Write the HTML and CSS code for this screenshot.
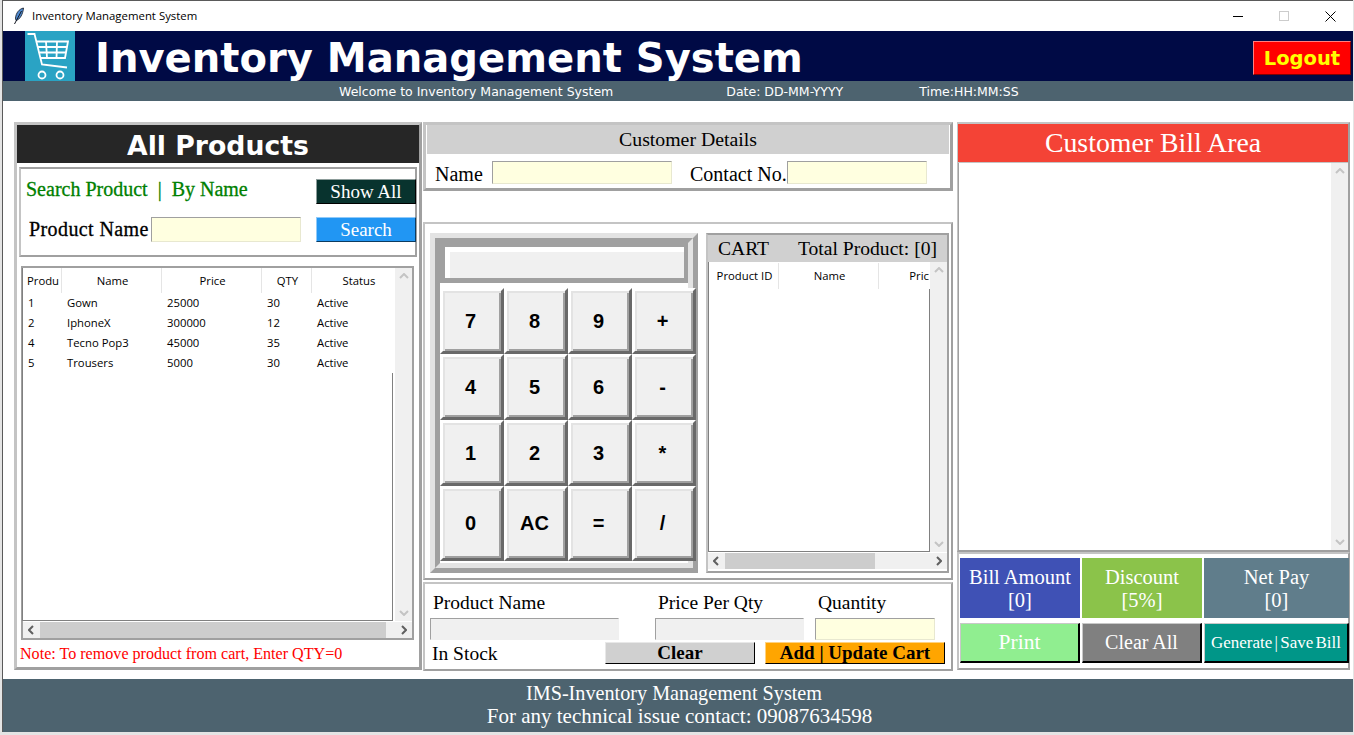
FILE: index.html
```html
<!DOCTYPE html>
<html>
<head>
    <title>Inventory Management System</title>
    <link rel="stylesheet" href="styles.css">
</head>
<body>
<svg class="defs" width="0" height="0">
    <symbol id="chev" viewBox="0 0 10 6"><path d="M1 5l4-4 4 4" fill="none" stroke="currentColor" stroke-width="2"/></symbol>
</svg>
<div class="window">
    <div class="titlebar">
        <svg class="feather" width="12" height="18" viewBox="0 0 12 18">
            <path d="M10.5 1C6 2 3 6 2.5 11c0 1 .2 2 .6 2.5C7 12.5 10 7 10.5 1z" fill="#4f8ad0" stroke="#10151f" stroke-width=".8"/>
            <path d="M8.5 4L1.5 17" stroke="#10151f" stroke-width="1"/>
        </svg>
        <span class="titlebar-text">Inventory Management System</span>
        <div class="win-btn">
            <svg width="10" height="10"><path d="M0 5.5h10" stroke="#000"/></svg>
        </div>
        <div class="win-btn">
            <svg width="10" height="10"><rect x=".5" y=".5" width="9" height="9" fill="none" stroke="#ccc"/></svg>
        </div>
        <div class="win-btn">
            <svg width="11" height="11"><path d="M.5.5l10 10M10.5.5l-10 10" stroke="#000"/></svg>
        </div>
    </div>

    <div class="header">
        <svg class="cart-logo" width="50" height="50" viewBox="0 0 50 50">
            <rect width="50" height="50" fill="#2aa3c4"/>
            <g fill="none" stroke="#fff" stroke-width="1.8">
                <path d="M2.5 3H9.5L17 33.5 42 36.5"/>
                <path d="M11 10.5H43L40 27H15"/>
                <path d="M13 16H42M14.5 21.5H41M21 10.5l1 16.5M32 10.5l-.5 16.5"/>
                <circle cx="17" cy="44" r="3.5"/>
                <circle cx="35" cy="44" r="3.5"/>
            </g>
        </svg>
        <h1 class="app-title">Inventory Management System</h1>
        <button type="button" class="logout">Logout</button>
    </div>
    <div class="subbar">
        <span>Welcome to Inventory Management System</span>
        <span class="sub-date">Date: DD-MM-YYYY</span>
        <span class="sub-time">Time:HH:MM:SS</span>
    </div>

    <div class="main">
        <div class="panel products">
            <div class="products-title">All Products</div>
            <div class="search-frame">
                <div class="search-row">
                    <span class="search-head">Search Product&nbsp; |&nbsp; By Name</span>
                    <button type="button" class="btn-side btn-showall">Show All</button>
                </div>
                <div class="search-row search-row2">
                    <label class="search-label">Product Name</label>
                    <input type="text" class="yellow search-input">
                    <button type="button" class="btn-side btn-search">Search</button>
                </div>
            </div>
            <div class="table-frame">
                <div class="tree-wrap">
                    <div class="tree">
                        <div class="tree-head">
                            <span class="col-id">Produ</span>
                            <span class="col-name">Name</span>
                            <span class="col-price">Price</span>
                            <span class="col-qty">QTY</span>
                            <span class="col-status">Status</span>
                        </div>
                        <div class="tree-row">
                            <span class="col-id">1</span><span class="col-name">Gown</span><span class="col-price">25000</span><span class="col-qty">30</span><span class="col-status">Active</span>
                        </div>
                        <div class="tree-row">
                            <span class="col-id">2</span><span class="col-name">IphoneX</span><span class="col-price">300000</span><span class="col-qty">12</span><span class="col-status">Active</span>
                        </div>
                        <div class="tree-row">
                            <span class="col-id">4</span><span class="col-name">Tecno Pop3</span><span class="col-price">45000</span><span class="col-qty">35</span><span class="col-status">Active</span>
                        </div>
                        <div class="tree-row">
                            <span class="col-id">5</span><span class="col-name">Trousers</span><span class="col-price">5000</span><span class="col-qty">30</span><span class="col-status">Active</span>
                        </div>
                        <div class="tree-rest"></div>
                    </div>
                    <div class="vscroll">
                        <svg class="chev"><use href="#chev"/></svg>
                        <svg class="chev chev-down"><use href="#chev"/></svg>
                    </div>
                </div>
                <div class="hscroll">
                    <svg class="chev chev-left"><use href="#chev"/></svg>
                    <div class="hthumb"></div>
                    <svg class="chev chev-right"><use href="#chev"/></svg>
                </div>
            </div>
            <div class="note">Note: To remove product from cart, Enter QTY=0</div>
        </div>

        <div class="middle">
            <div class="panel customer">
                <div class="customer-title">Customer Details</div>
                <div class="customer-row">
                    <label class="cust-name">Name</label>
                    <input type="text" class="yellow cust-input1">
                    <label class="cust-contact">Contact No.</label>
                    <input type="text" class="yellow cust-input2">
                </div>
            </div>

            <div class="panel calc-cart">
                <div class="calc">
                    <div class="calc-inner">
                        <input type="text" class="calc-display">
                        <div class="calc-keys">
                            <button type="button">7</button><button type="button">8</button><button type="button">9</button><button type="button">+</button>
                            <button type="button">4</button><button type="button">5</button><button type="button">6</button><button type="button">-</button>
                            <button type="button">1</button><button type="button">2</button><button type="button">3</button><button type="button">*</button>
                            <button type="button">0</button><button type="button">AC</button><button type="button">=</button><button type="button">/</button>
                        </div>
                    </div>
                </div>
                <div class="cart">
                    <div class="cart-head"><span>CART</span><span>Total Product: [0]</span></div>
                    <div class="cart-body">
                        <div class="cart-tree">
                            <div class="tree-head cart-tree-head">
                                <span class="ccol-id">Product ID</span>
                                <span class="ccol-name">Name</span>
                                <span class="ccol-price">Pric</span>
                            </div>
                            <div class="cart-rest"></div>
                        </div>
                        <div class="vscroll">
                            <svg class="chev"><use href="#chev"/></svg>
                            <svg class="chev chev-down"><use href="#chev"/></svg>
                        </div>
                    </div>
                    <div class="hscroll cart-hscroll">
                        <svg class="chev chev-left"><use href="#chev"/></svg>
                        <div class="hthumb"></div>
                        <svg class="chev chev-right"><use href="#chev"/></svg>
                    </div>
                </div>
            </div>

            <div class="panel cart-form">
                <div class="form-fields">
                    <div class="field field-name">
                        <label>Product Name</label>
                        <input type="text" class="grey">
                    </div>
                    <div class="field field-price">
                        <label>Price Per Qty</label>
                        <input type="text" class="grey">
                    </div>
                    <div class="field field-qty">
                        <label>Quantity</label>
                        <input type="text" class="yellow">
                    </div>
                </div>
                <div class="form-actions">
                    <span class="in-stock">In Stock</span>
                    <button type="button" class="form-btn btn-clear">Clear</button>
                    <button type="button" class="form-btn btn-add">Add | Update Cart</button>
                </div>
            </div>
        </div>

        <div class="right">
            <div class="panel bill">
                <div class="bill-title">Customer Bill Area</div>
                <div class="bill-body">
                    <div class="bill-text"></div>
                    <div class="vscroll">
                        <svg class="chev"><use href="#chev"/></svg>
                        <svg class="chev chev-down"><use href="#chev"/></svg>
                    </div>
                </div>
            </div>
            <div class="panel bill-menu">
                <div class="tile tile-amount">Bill Amount<br>[0]</div>
                <div class="tile tile-discount">Discount<br>[5%]</div>
                <div class="tile tile-net">Net Pay<br>[0]</div>
                <button type="button" class="bill-btn btn-print">Print</button>
                <button type="button" class="bill-btn btn-clearall">Clear All</button>
                <button type="button" class="bill-btn btn-generate">Generate | Save Bill</button>
            </div>
        </div>
    </div>

    <div class="footer">
        <div>IMS-Inventory Management System</div>
        <div class="footer-contact">For any technical issue contact: 09087634598</div>
    </div>
</div>
</body>
</html>
```

FILE: styles.css
```css
* {
    box-sizing: border-box;
}

body {
    margin: 0;
    background: #e4e4e4;
    font-family: "Liberation Serif", serif;
    color: #000;
    overflow: hidden;
}

button {
    font-family: "Liberation Serif", serif;
    padding: 0;
    cursor: pointer;
}

input {
    display: block;
    margin: 0;
    padding: 0;
}

.defs {
    position: absolute;
}

.window {
    margin-left: 2px;
    width: 1351px;
    height: 732px;
    background: #fff;
    border-top: 1px solid #5a5a5a;
    border-left: 1px solid #5a5a5a;
    display: flex;
    flex-direction: column;
}

.titlebar {
    height: 30px;
    display: flex;
    align-items: center;
    padding-left: 10px;
}

.feather {
    margin-right: 7px;
}

.titlebar-text {
    font-family: "Open Sans", sans-serif;
    font-size: 11.4px;
    flex: 1;
    margin-top: -2px;
}

.win-btn {
    width: 46px;
    height: 30px;
    display: flex;
    align-items: center;
    justify-content: center;
}

.header {
    height: 50px;
    background: #000a45;
    display: flex;
    align-items: center;
    padding: 0 2px 0 22px;
}

.cart-logo {
    display: block;
}

.app-title {
    flex: 1;
    margin: 4px 0 0 20px;
    font-family: "DejaVu Sans", sans-serif;
    font-size: 40.1px;
    font-weight: bold;
    color: #fff;
    white-space: nowrap;
}

.logout {
    width: 98px;
    height: 34px;
    margin-top: 3px;
    padding-top: 2px;
    background: #f00;
    color: #ff0;
    font-family: "DejaVu Sans", sans-serif;
    font-size: 19.5px;
    font-weight: bold;
    border: 1px solid;
    border-color: #ff8080 #800000 #800000 #ff8080;
}

.subbar {
    height: 20px;
    background: #4d636f;
    color: #fff;
    font-family: "DejaVu Sans", sans-serif;
    font-size: 12.5px;
    line-height: 21px;
    padding-left: 336px;
    white-space: nowrap;
}

.sub-date {
    margin-left: 109px;
}

.sub-time {
    margin-left: 72px;
}

.main {
    height: 578px;
    padding: 21px 0 0 11px;
    display: flex;
    align-items: flex-start;
}

.panel {
    border: 2px solid;
    border-color: #c4c4c4 #a0a0a0 #a0a0a0 #c4c4c4;
    background: #fff;
}

/* left column */
.products {
    width: 408px;
    height: 548px;
    border-width: 3px;
    flex: none;
}

.products-title {
    height: 38px;
    background: #262626;
    color: #fff;
    font-family: "DejaVu Sans", sans-serif;
    font-size: 26.7px;
    font-weight: bold;
    line-height: 41px;
    text-align: center;
}

.search-frame {
    width: 398px;
    height: 90px;
    margin: 4px 0 0 2px;
    border: 2px solid;
    border-color: #a0a0a0 #a0a0a0 #a0a0a0 #c4c4c4;
    padding-top: 10px;
}

.search-row {
    display: flex;
    align-items: center;
    height: 25px;
}

.search-row2 {
    margin-top: 13px;
}

.search-head {
    flex: none;
    width: 295px;
    padding-left: 5px;
    color: #008000;
    font-size: 20px;
    white-space: nowrap;
    margin-top: -4px;
    -webkit-text-stroke: .3px #008000;
}

.search-label {
    flex: none;
    width: 130px;
    padding-left: 8px;
    font-size: 20px;
    letter-spacing: .4px;
    white-space: nowrap;
    -webkit-text-stroke: .3px #000;
}

.search-input {
    flex: none;
    width: 150px;
    height: 25px;
    margin-right: 15px;
}

.yellow,
.grey {
    border: 1px solid;
    border-color: #a0a0a0 #e8e8d0 #e8e8d0 #a0a0a0;
    background: #ffffe0;
}

.grey {
    background: #f0f0f0;
    border-color: #a0a0a0 #f0f0f0 #f0f0f0 #a0a0a0;
}

.btn-side {
    width: 100px;
    height: 25px;
    flex: none;
    color: #fff;
    font-size: 19px;
    border: 1px solid;
}

.btn-showall {
    background: #08332e;
    border-color: #8c9c9a #000 #000 #8c9c9a;
}

.btn-search {
    background: #2196f3;
    border-color: #90caf9 #0c3c61 #0c3c61 #90caf9;
}

.table-frame {
    width: 393px;
    height: 374px;
    margin: 9px 0 0 4px;
    border: 2px solid #a0a0a0;
}

.tree-wrap {
    height: 353px;
    display: flex;
}

.tree {
    width: 371px;
    display: flex;
    flex-direction: column;
    border-bottom: 1px solid #808080;
    border-left: 1px solid #808080;
    margin-left: -1px;
    font-family: "Open Sans", sans-serif;
    font-size: 11.3px;
}

.tree-head {
    display: flex;
    height: 25px;
    line-height: 25px;
    text-align: center;
}

.tree-head span {
    flex: none;
    padding-left: 2px;
    border-right: 1px solid #e5e5e5;
    white-space: nowrap;
    overflow: hidden;
}

.tree-row {
    display: flex;
    height: 20px;
    line-height: 20px;
}

.tree-row span {
    flex: none;
    padding-left: 5px;
}

.col-id {
    width: 39px;
}

.col-name,
.col-price {
    width: 100px;
}

.col-qty {
    width: 50px;
}

.col-status {
    width: 92px;
}

.tree-head .col-status {
    border-right: none;
}

.tree-rest {
    flex: 1;
    border-right: 1px solid #808080;
}

.vscroll {
    flex: none;
    position: relative;
    width: 17px;
    margin-left: auto;
    background: #f0f0f0;
    color: #c4c4c4;
    display: flex;
    flex-direction: column;
    justify-content: space-between;
    align-items: center;
    padding: 5px 0;
}

.chev {
    display: block;
    width: 10px;
    height: 6px;
}

.chev-down {
    transform: rotate(180deg);
}

.chev-left {
    transform: rotate(-90deg);
    margin: 0 3px;
}

.chev-right {
    transform: rotate(90deg);
    margin: 0 3px;
}

.hscroll {
    height: 16px;
    margin-top: 1px;
    background: #f0f0f0;
    color: #606060;
    display: flex;
    align-items: center;
}

.hthumb {
    width: 346px;
    height: 16px;
    margin-left: 1px;
    background: #cdcdcd;
    margin-right: auto;
}

.note {
    margin-top: 2px;
    padding-left: 3px;
    color: #f00;
    font-size: 16.1px;
    line-height: 24px;
    white-space: nowrap;
}

/* middle column */
.middle {
    width: 530px;
    margin-left: 1px;
    flex: none;
}

.customer {
    height: 69px;
    border-width: 3px;
}

.customer-title {
    height: 29px;
    margin: 0 1px;
    background: #d0d0d0;
    font-size: 19.8px;
    line-height: 29px;
    text-align: center;
}

.customer-row {
    display: flex;
    align-items: center;
    height: 23px;
    margin-top: 7px;
    font-size: 20px;
    white-space: nowrap;
}

.customer-row input {
    height: 23px;
}

.customer-row label {
    margin-top: 3px;
}

.cust-name {
    width: 66px;
    padding-left: 9px;
}

.cust-input1 {
    width: 180px;
}

.cust-contact {
    width: 115px;
    padding-left: 18px;
}

.cust-input2 {
    width: 140px;
}

.calc-cart {
    height: 358px;
    margin-top: 31px;
    padding: 9px 0 0 5px;
    display: flex;
    align-items: flex-start;
}

.calc {
    width: 268px;
    height: 340px;
    flex: none;
    border: 5px solid;
    border-color: #e3e3e3 #a0a0a0 #a0a0a0 #e3e3e3;
}

.calc-inner {
    height: 330px;
    border: 5px solid;
    border-color: #a0a0a0 #e3e3e3 #e3e3e3 #a0a0a0;
}

.calc-display {
    width: 248px;
    height: 40px;
    background: #f0f0f0;
    border-style: solid;
    border-width: 4px 4px 5px 5px;
    border-color: #a0a0a0;
    box-shadow: inset 5px 5px 0 #fff;
}

.calc-keys {
    display: grid;
    grid-template-columns: repeat(4, 64px);
    grid-template-rows: 66px 66px 66px 75px;
    margin-top: 5px;
}

.calc-keys button {
    background: #f0f0f0;
    font-family: "Liberation Sans", sans-serif;
    font-size: 20px;
    font-weight: bold;
    padding: 0 3px 0 0;
    border: 3px solid;
    border-color: #fff #696969 #696969 #fff;
    box-shadow: inset 2px 2px 0 #e3e3e3, inset -2px -2px 0 #a0a0a0;
}

.cart {
    width: 243px;
    height: 340px;
    margin-left: 8px;
    border: 2px solid;
    border-color: #a0a0a0 #a0a0a0 #a0a0a0 #c4c4c4;
}

.cart-head {
    height: 27px;
    background: #d0d0d0;
    font-size: 19.6px;
    line-height: 28px;
    padding: 0 10px;
    display: flex;
    justify-content: space-between;
    white-space: nowrap;
}

.cart-body {
    height: 290px;
    display: flex;
}

.cart-tree {
    width: 222px;
    display: flex;
    flex-direction: column;
    border-left: 1px solid #808080;
    border-bottom: 1px solid #808080;
    font-family: "Open Sans", sans-serif;
    font-size: 11.3px;
}

.cart-tree-head {
    height: 26px;
    line-height: 26px;
    margin-top: 1px;
}

.ccol-id {
    width: 70px;
}

.ccol-name {
    width: 100px;
}

.ccol-price {
    width: 50px;
    text-align: right;
    border-right: none !important;
}

.cart-rest {
    flex: 1;
    border-right: 1px solid #808080;
}

.cart-hscroll .hthumb {
    width: 150px;
    margin-left: 1px;
}

.cart-form {
    height: 89px;
    margin-top: 2px;
    padding: 0 0 0 5px;
}

.form-fields {
    display: flex;
}

.field {
    font-size: 19.5px;
}

.field label {
    display: block;
    height: 34px;
    line-height: 38px;
    padding-left: 3px;
    white-space: nowrap;
}

.field input {
    width: 100%;
    height: 22px;
}

.field-name {
    width: 189px;
}

.field-price {
    width: 149px;
    margin-left: 36px;
}

.field-qty {
    width: 120px;
    margin-left: 11px;
}

.form-actions {
    display: flex;
    align-items: center;
    height: 24px;
    margin-top: 1px;
}

.in-stock {
    width: 175px;
    padding: 2px 0 0 2px;
    font-size: 19.5px;
}

.form-btn {
    height: 22px;
    font-size: 19px;
    font-weight: bold;
    border: 1px solid;
    line-height: 20px;
}

.btn-clear {
    width: 150px;
    background: #d0d0d0;
    border-color: #e8e8e8 #000 #000 #e8e8e8;
}

.btn-add {
    width: 180px;
    margin-left: 10px;
    background: #ffa500;
    border-color: #ffd280 #000 #000 #ffd280;
}

/* right column */
.right {
    width: 393px;
    margin-left: 4px;
    flex: none;
}

.bill {
    height: 430px;
    border-left-width: 1px;
}

.bill-title {
    height: 38px;
    background: #f44336;
    color: #fff;
    font-size: 27.8px;
    line-height: 38px;
    text-align: center;
}

.bill-body {
    height: 388px;
    display: flex;
    border-top: 1px solid #c4c4c4;
}

.bill-text {
    flex: 1;
    border-left: 1px solid #a0a0a0;
}

.bill-menu {
    height: 118px;
    padding: 4px 0 0 1px;
    display: grid;
    grid-template-columns: 120px 120px 145px;
    grid-template-rows: 60px 40px;
    column-gap: 2px;
    row-gap: 5px;
}

.tile {
    color: #fff;
    font-size: 20.5px;
    line-height: 23px;
    text-align: center;
    padding-top: 8px;
}

.tile-amount {
    background: #3f51b5;
}

.tile-discount {
    background: #8bc34a;
}

.tile-net {
    background: #607d8b;
}

.bill-btn {
    color: #fff;
    font-size: 20px;
    border: 1px solid;
    border-width: 1px 2px 2px 1px;
    border-color: #c8c8c8 #000 #000 #c8c8c8;
}

.btn-print {
    background: #90ee90;
    font-size: 21.5px;
}

.btn-clearall {
    background: #808080;
}

.btn-generate {
    background: #009688;
    font-size: 17px;
    word-spacing: -2px;
}

.footer {
    height: 53px;
    background: #4d636f;
    color: #fff;
    font-size: 20.2px;
    line-height: 23px;
    text-align: center;
    padding: 3px 8px 0 0;
}

.footer-contact {
    font-size: 21px;
    padding-left: 11px;
}
```
